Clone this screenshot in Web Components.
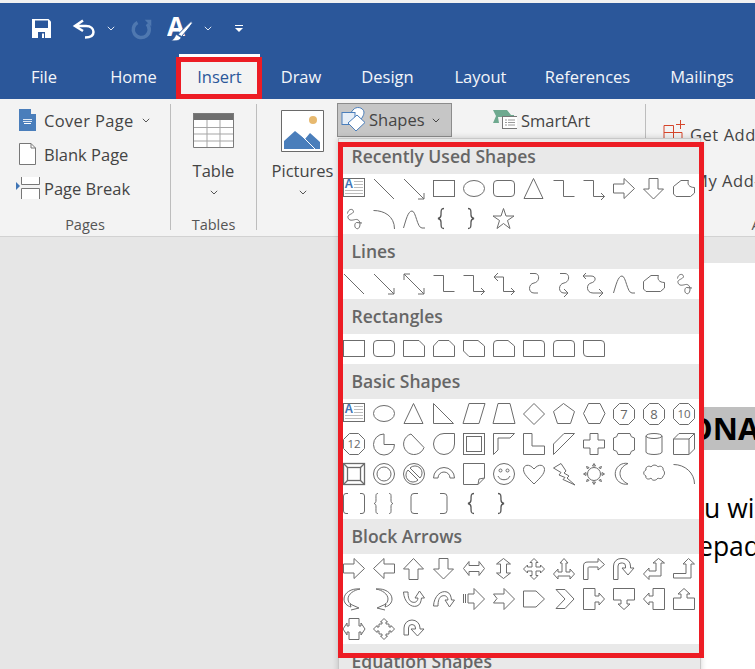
<!DOCTYPE html>
<html lang="en">
<head>
<meta charset="utf-8">
<title>Word Insert Shapes</title>
<style>
html,body{margin:0;padding:0;background:#e6e6e6;}
body{width:755px;height:669px;overflow:hidden;font-family:"Open Sans","Noto Sans",sans-serif;}
</style>
</head>
<body>
<word-app>
  <title-bar slot="top">
    <qat-bar></qat-bar>
    <tab-strip>
      <ribbon-tab style="--w:88px">File</ribbon-tab>
      <ribbon-tab style="--w:91px">Home</ribbon-tab>
      <ribbon-tab active style="--w:81px">Insert</ribbon-tab>
      <ribbon-tab style="--w:82px">Draw</ribbon-tab>
      <ribbon-tab style="--w:91px">Design</ribbon-tab>
      <ribbon-tab style="--w:95px">Layout</ribbon-tab>
      <ribbon-tab style="--w:119px">References</ribbon-tab>
      <ribbon-tab style="--w:110px">Mailings</ribbon-tab>
    </tab-strip>
  </title-bar>
  <ribbon-bar slot="top">
    <ribbon-group label="Pages" style="--w:171px">
      <row-stack>
        <row-button chevron style="letter-spacing:.35px"><rb-icon name="cover" slot="icon"></rb-icon>Cover Page</row-button>
        <row-button><rb-icon name="blank" slot="icon"></rb-icon>Blank Page</row-button>
        <row-button><rb-icon name="break" slot="icon"></rb-icon>Page Break</row-button>
      </row-stack>
    </ribbon-group>
    <ribbon-group label="Tables" style="--w:86px">
      <large-button><rb-icon name="table" slot="icon"></rb-icon>Table</large-button>
    </ribbon-group>
    <ribbon-group style="--w:389px;--pl:16px;--dir:row">
      <large-button style="--bw:59px"><rb-icon name="pictures" slot="icon"></rb-icon>Pictures</large-button>
      <shapes-button><rb-icon name="shapes" slot="icon"></rb-icon>Shapes</shapes-button>
      <smart-button><rb-icon name="smartart" slot="icon"></rb-icon>SmartArt</smart-button>
    </ribbon-group>
    <ribbon-group label="Add-ins" flat style="--w:262px;--pl:17px">
      <addin-stack>
        <addin-row><rb-icon name="addin" slot="icon" style="margin-top:-10px"></rb-icon>Get Add-ins</addin-row>
        <addin-row style="padding-left:3px"><span slot="icon"></span>My Add-ins</addin-row>
      </addin-stack>
    </ribbon-group>
  </ribbon-bar>
  <doc-area slot="main">
    <doc-page>
      <doc-heading>ONA</doc-heading>
      <doc-line>u wi</doc-line>
      <doc-line style="text-indent:-6px">epad</doc-line>
    </doc-page>
  </doc-area>
  <shapes-menu slot="over">
    <shape-section label="Recently Used Shapes" shapes="textbox line arrow rect oval rrect tri elbow elbowarrow rarrow darrow free scribble arc curve lbrace rbrace star"></shape-section>
    <shape-section label="Lines" shapes="line arrow dblarrow elbow elbowarrow elbowdbl curveconn curvearrow curvedbl curve free scribble"></shape-section>
    <shape-section label="Rectangles" shapes="rect rrect snip1 snip2 snipdiag sniprnd rnd1 rnd2 rnddiag"></shape-section>
    <shape-section label="Basic Shapes" shapes="textbox oval tri rtri para trap diamond penta hexa oct7 oct8 oct10 oct12 pie chord tear frame half lshape stripe plus plaque can cube bevel donut nosym blockarc fold smiley heart bolt sun moon cloud arc2 dbracket dbrace lbracket rbracket lbrace rbrace"></shape-section>
    <shape-section label="Block Arrows" shapes="rarrow larrow uarrow darrow lrarrow udarrow quad lru bent uturn leftup bentup curveright curveleft curveup curvedown striped notched pentarrow chevron rcall dcall lcall ucall lrcall quadcall circ"></shape-section>
    <shape-section label="Equation Shapes" shapes=""></shape-section>
  </shapes-menu>
  <red-frame slot="over" style="--l:176px;--t:57px;--fw:86px;--fh:42px"></red-frame>
  <red-frame slot="over" style="--l:338px;--t:142px;--fw:366px;--fh:516px"></red-frame>
</word-app>

<script>
const shadow = (el, html) => { el.attachShadow({mode:'open'}).innerHTML = html; };
const simple = (name, css, markup='<slot></slot>') => {
  customElements.define(name, class extends HTMLElement {
    connectedCallback(){ if(!this.shadowRoot) shadow(this, `<style>${css}</style>${markup}`); }
  });
};
const CHEV = c => `<svg width="8" height="5" viewBox="0 0 8 5" style="display:block"><path d="M.8 .8L4 4 7.2 .8" fill="none" stroke="${c}" stroke-width="1"/></svg>`;

simple('word-app', `:host{display:flex;flex-direction:column;position:relative;width:755px;height:669px;overflow:hidden}
  .main{flex:1;display:flex;min-height:0}`,
  `<slot name="top"></slot><div class="main"><slot name="main"></slot></div><slot name="over"></slot>`);

simple('title-bar', `:host{display:block;background:#2b579a;border-top:3px solid #f1f1f1;height:96px;box-sizing:content-box}`);

simple('qat-bar', `:host{display:flex;align-items:center;height:51px;padding-left:30px;box-sizing:border-box;color:#fff}
  svg{display:block}`,
`<svg width="23" height="20" viewBox="0 0 23 20"><path fill="#fff" d="M2 0H18.500L21 2.500V19H2Z"/><path fill="#2b579a" d="M5 1.500H18V9H5ZM8 13H15V19H8Z"/><path fill="#fff" d="M12 14.500h2V19h-2z"/></svg>
<svg width="24" height="22" viewBox="0 0 24 22" style="margin-left:19px"><path fill="none" stroke="#fff" stroke-width="2.500" d="M11 2.500L3 8l8 5M3 8H14C19 8 21.500 11 21.500 14C21.500 17 19 19.500 13 19.500"/></svg>
<span style="margin-left:11px">${CHEV('#dfe7f2')}</span>
<svg width="24" height="22" viewBox="0 0 24 22" style="margin-left:14px"><path fill="none" stroke="#4f78b0" stroke-width="3.500" d="M8.500 4.500A8 8 0 1 0 18 6"/><path fill="#4f78b0" d="M15.700 1.800H22.300V8.500Z"/></svg>
<svg width="26" height="24" viewBox="0 0 26 24" style="margin-left:14px"><text x="0" y="19" font-family="Open Sans,sans-serif" font-weight="700" font-size="26" fill="#fff">A</text><path fill="#fff" stroke="#2b579a" stroke-width="1" d="M24 4.500L25.500 6C22 11 18.500 15 14.500 19.500L11 17.500C15 13 20 8.500 24 4.500Z"/><path fill="#fff" stroke="#2b579a" stroke-width=".6" d="M9.500 17.500L14 20.500C13.500 23 10 24.500 4 23.500 7.500 22.500 7.500 19.500 9.500 17.500Z"/></svg>
<span style="margin-left:11px">${CHEV('#dfe7f2')}</span>
<svg width="10" height="8" viewBox="0 0 10 8" style="margin-left:22px"><path fill="#fff" d="M1 0H9V1H1ZM1 3H9L5 7Z"/></svg>`);

simple('tab-strip', `:host{display:flex;height:45px;white-space:nowrap}`);

customElements.define('ribbon-tab', class extends HTMLElement {
  connectedCallback(){ if(this.shadowRoot) return;
    shadow(this, `<style>:host{display:flex;align-items:center;justify-content:center;flex:none;width:var(--w);box-sizing:border-box;
      height:45px;padding-bottom:1px;color:#f3f5f9;font-size:16.500px;font-family:"Open Sans",sans-serif}
      :host([active]){background:#f3f3f3;color:#2b579a;border-top:3px solid #fff;padding-bottom:4px;}</style><slot></slot>`);
  }
});

simple('ribbon-bar', `:host{display:flex;align-items:flex-start;flex:none;height:138px;box-sizing:border-box;background:#f3f3f3;border-bottom:1px solid #d2d2d2;padding-top:5px;overflow:hidden;white-space:nowrap;color:#444;font-size:16.500px;font-family:"Open Sans",sans-serif}`);

customElements.define('ribbon-group', class extends HTMLElement {
  connectedCallback(){ if(this.shadowRoot) return;
    const l = this.getAttribute('label');
    shadow(this, `<style>:host{display:flex;flex-direction:column;flex:none;width:var(--w);height:126px;box-sizing:border-box;border-right:1px solid #bdbdbd;padding-left:var(--pl,0)}
      :host([flat]){border-right:0}
      .c{flex:1;display:flex;flex-direction:var(--dir,column);min-height:0}
      .l{height:20px;margin-bottom:-5px;line-height:20px;text-align:center;font-size:14.500px;color:#555;margin-left:calc(0px - var(--pl,0px))}</style>
      <div class="c"><slot></slot></div>${l?`<div class="l">${l}</div>`:''}`);
  }
});

simple('row-stack', `:host{display:flex;flex-direction:column}`);

customElements.define('row-button', class extends HTMLElement {
  connectedCallback(){ if(this.shadowRoot) return;
    shadow(this, `<style>:host{display:flex;align-items:center;height:34px;padding-left:16px}
      .i{width:24px;margin-right:4px;display:flex} .c{margin-left:8px;margin-top:-2px} .t{margin-top:-2px}</style>
      <span class="i"><slot name="icon"></slot></span><span class="t"><slot></slot></span>${this.hasAttribute('chevron')?`<span class="c">${CHEV('#555')}</span>`:''}`);
  }
});

customElements.define('large-button', class extends HTMLElement {
  connectedCallback(){ if(this.shadowRoot) return;
    shadow(this, `<style>:host{display:flex;flex-direction:column;align-items:center;width:var(--bw,auto);padding-top:6px;box-sizing:border-box}
      .i{height:42px;display:flex;align-items:center} .t{line-height:22px;margin-top:8px} .c{margin-top:8px}</style>
      <span class="i"><slot name="icon"></slot></span><span class="t"><slot></slot></span><span class="c">${CHEV('#555')}</span>`);
  }
});

customElements.define('shapes-button', class extends HTMLElement {
  connectedCallback(){ if(this.shadowRoot) return;
    shadow(this, `<style>:host{display:flex;align-items:center;width:115px;height:34px;box-sizing:border-box;margin:-1px 0 0 5px;background:#c6c6c6;border:1px solid #8c8c8c;padding-left:3px;flex:none}
      .i{width:24px;margin-right:4px;display:flex} .c{margin-left:7px} .t{margin-top:-2px}</style>
      <span class="i"><slot name="icon"></slot></span><span class="t"><slot></slot></span><span class="c">${CHEV('#444')}</span>`);
  }
});
simple('smart-button', `:host{display:flex;align-items:center;height:34px;margin-left:41px;flex:none} .i{width:24px;margin-right:4px;display:flex} .t{margin-top:-2px}`,
  `<span class="i"><slot name="icon"></slot></span><span class="t"><slot></slot></span>`);

simple('addin-stack', `:host{display:flex;flex-direction:column;gap:29px;padding-top:22px;letter-spacing:.55px}`);
simple('addin-row', `:host{display:flex;align-items:center;height:17px} .i{width:27px;display:flex}`, `<span class="i"><slot name="icon"></slot></span><slot></slot>`);

const RB = {
cover:[24,24,`<path fill="#4a7ebb" d="M3 0H15L20 5V22H3Z"/><path fill="#f3f3f3" d="M15 0V5H20L20 4 16 0Z"/><path fill="#dfe8f3" d="M7 10h9v1H7zM7 12h9v1H7z"/><path fill="#fff" d="M8 14h7v1H8z"/>`],
blank:[24,24,`<path fill="#fff" stroke="#777" d="M3.500 .5H15L19.500 5V21.500H3.500Z"/><path fill="none" stroke="#777" d="M15 .5V5H19.500"/>`],
break:[24,24,`<path fill="#fff" stroke="none" d="M5 0H24V7H5Z"/><path fill="none" stroke="#777" d="M5.500 0V7.500H23.500V0M5.500 22V11.500H23.500V22"/><path fill="#fff" d="M6 12H23V22H6Z"/><path fill="#3f74b5" d="M0 5V13L4 9Z"/>`],
table:[41,36,`<path fill="#fff" d="M.5 .5H40.500V34.500H.5Z"/><path fill="#6e6e6e" d="M0 0H41V7H0Z"/><path fill="none" stroke="#a5a5a5" d="M14 7V34M27 7V34M1 14.500H40M1 21H40M1 28H40"/><path fill="none" stroke="#7a7a7a" d="M.5 .5H40.500V34.500H.5Z"/>`],
pictures:[43,42,`<path fill="#fff" stroke="#6a6a6a" d="M.5 .5H42.500V41.500H.5Z"/><circle cx="32" cy="10" r="4" fill="#e7b96f"/><path fill="#4a7ebb" d="M3 39V31L14 21 24 29 29 23 39 32V39Z"/><path stroke="#fff" fill="none" d="M20 25L34 39"/>`],
shapes:[26,26,`<path fill="#fff" stroke="#4a7ebb" d="M12 3C15 -1 22 0 23 5 23 8 21 12 17 15L8 8Z"/><rect x="1" y="5.500" width="13" height="12" fill="#e6eef7" stroke="#4a7ebb"/><path fill="#fff" stroke="#4a7ebb" d="M16 8L24 15.500 15 24 7 16Z"/>`],
smartart:[24,24,`<path fill="#6ea98f" d="M0 1H14L18 6 21 6V8H5L6 14H0L3 7Z"/><rect x="9.500" y="7.500" width="15" height="12" fill="#fff" stroke="#777"/><path stroke="#999" d="M12 11h2M15 11h7M12 13.500h2M15 13.500h7M12 16h2M15 16h7"/>`],
addin:[24,20,`<path fill="none" stroke="#d5452a" d="M1 5.500H10.500V19M1 5.500V19M1 12.500H19M19 12.500V19M17.500 0V9M13 4.500H22"/>`],
};
customElements.define('rb-icon', class extends HTMLElement {
  connectedCallback(){ if(this.shadowRoot) return;
    const [w,h,m]=RB[this.getAttribute('name')];
    shadow(this, `<style>:host{display:block;flex:none;line-height:0}</style><svg width="${w}" height="${h}" viewBox="0 0 ${w} ${h}" style="display:block">${m}</svg>`);
  }
});

const oct = n => `<path d="M6.500 .5H15.500L21.500 6.500V15.500L15.500 21.500H6.500L.5 15.500V6.500Z"/><text x="11" y="${n.length>1?15:15.500}" text-anchor="middle" font-size="${n.length>1?11.500:13}" font-family="Open Sans,sans-serif" fill="#666" stroke="none">${n}</text>`;
const P = d => `<path d="${d}"/>`;
const ELBOW='M.5 2.500H10.500V18.500H21.500', HEADR='M18 15L21.500 18.500 18 22', CURV='M7 .5H12C17 .5 17 9 11 10 5 11 5 20 11 20H15';
const LB='M11 .5C8 .5 8 2 8 7 8 9.500 7 10 5 10.500 7 11 8 11.500 8 14 8 19 8 20.500 11 20.500', RBr='M5 .5C8 .5 8 2 8 7 8 9.500 9 10 11 10.500 9 11 8 11.500 8 14 8 19 8 20.500 5 20.500';
const SCRIB='M4.500 5.500C5 1 10 0 10.500 3.500 10.500 6 4 6.500 5 9.500 6 13.500 10 12 12.500 11.500 15 11 17 13 17 16 17 19 15.500 21.500 13.500 20.500 11 19.500 11.500 15 13.500 14.500 15 14.500 17 15 19 15';
const FREE='M.5 8.500L8 2.500H15.500C14 6 16 9.500 21.500 9.500V15L17.500 18.500H3L.5 16Z';
const ARROW={
 r:'M.5 6H11V.5L21.500 10.500 11 20.500V15H.5Z', l:'M21.500 6H11V.5L.5 10.500 11 20.500V15H21.500Z', u:'M6 21.500V11H.5L10.500 .5 20.500 11H15V21.500Z', d:'M6 .5V11H.5L10.500 21 20.500 11H15V.5Z'};
const SH = {
 textbox:`<rect x=".5" y=".5" width="21" height="18" fill="#fff"/><g stroke="#bcbcbc"><path d="M11 3.500H20M11 6.500H20M11 9.500H20M2 12.500H20M2 15.500H20"/></g><text x="1.500" y="10" font-size="12" font-weight="700" font-family="Liberation Sans,sans-serif" fill="#3f74b5" stroke="none">A</text>`,
 line:P('M1 1L21 21'), arrow:P('M1 1L21 21M21 15V21H15'), dblarrow:P('M1 1L21 21M21 15V21H15M1 7V1H7'),
 rect:'<rect x=".5" y="2.500" width="21" height="16"/>', oval:'<ellipse cx="11" cy="10.500" rx="10.500" ry="8"/>', rrect:'<rect x=".5" y="2.500" width="21" height="16" rx="3.500"/>',
 tri:P('M10.500 .5L20 20.500H1Z'), elbow:P(ELBOW), elbowarrow:P(ELBOW+HEADR), elbowdbl:P('M1 4H10.500V18.500H21.500M5 0L1 4 5 8'+HEADR),
 rarrow:P(ARROW.r), larrow:P(ARROW.l), uarrow:P(ARROW.u), darrow:P(ARROW.d), free:P(FREE), scribble:P(SCRIB),
 arc:P('M.5 2.500C11 2.500 21.500 8 21.500 21'), curve:P('M.5 20C3 12 5 3 9 3 13 3 14 20 19 20H22'),
 lbrace:`<path stroke="#555" stroke-width="1.300" d="${LB}"/>`, rbrace:`<path stroke="#555" stroke-width="1.300" d="${RBr}"/>`, star:P('M10.500 .5L13 8H21L14.500 12.500 17 20.500 10.500 15.500 4 20.500 6.500 12.500 0 8H8Z'),
 curveconn:P(CURV), curvearrow:P(CURV+'M11 16L15 20 11 24'), curvedbl:P('M3 0L0 3 3 6M0 3H8C14 3 13 9 8 10 3 11 3 20 10 20H20M16 16L20 20 16 24'),
 snip1:P('M.5 2.500H16L21.500 8V18.500H.5Z'), snip2:P('M5.500 2.500H16L21.500 8V18.500H.5V8Z'), snipdiag:P('M.5 2.500H15L21.500 8V18.500H6L.5 13Z'),
 sniprnd:P('M4 2.500H15L21.500 8V18.500H.5V6A3.500 3.500 0 0 1 4 2.500Z'), rnd1:P('M.5 2.500H18A3.500 3.500 0 0 1 21.500 6V18.500H.5Z'),
 rnd2:P('M4 2.500H18A3.500 3.500 0 0 1 21.500 6V18.500H.5V6A3.500 3.500 0 0 1 4 2.500Z'), rnddiag:P('M.5 2.500H18A3.500 3.500 0 0 1 21.500 6V18.500H4A3.500 3.500 0 0 1 .5 15Z'),
 rtri:P('M.5 .5L20.500 20.500H.5Z'), para:P('M6 .5H22L16 20.500H0Z'), trap:P('M5 .5H17L22 20.500H0Z'), diamond:P('M11 .5L21.500 11 11 21.500 .5 11Z'),
 penta:P('M10.500 .5L21.500 8.500 17.500 20.500H4.500L.5 8.500Z'), hexa:P('M5.500 .5H17L22 10.500 17 20.500H5.500L.5 10.500Z'),
 oct7:oct('7'), oct8:oct('8'), oct10:oct('10'), oct12:oct('12'),
 pie:P('M11 1A10.500 10.500 0 1 0 21.500 11.500H11Z'), chord:P('M8 1L21 14.500A10.500 10.500 0 1 1 8 1Z'), tear:P('M11 .5H21.500V11A10.500 10.500 0 1 1 11 .5Z'),
 frame:'<rect x=".5" y=".5" width="21" height="21"/><rect x="3.500" y="3.500" width="15" height="15"/>', half:P('M.5 .5H21.500L17 5H5V17L.5 21.500Z'),
 lshape:P('M.5 .5H9V13H21.500V21.500H.5Z'), stripe:P('M.5 11L11 .5H21.500L.5 21.500Z'), plus:P('M7 .5H15V7H21.500V15H15V21.500H7V15H.5V7H7Z'),
 plaque:P('M5 .5H17A5 5 0 0 0 21.500 5V17A5 5 0 0 0 17 21.500H5A5 5 0 0 0 .5 17V5A5 5 0 0 0 5 .5Z'),
 can:'<ellipse cx="11" cy="3" rx="8" ry="2.500"/><path d="M3 3V19A8 2.500 0 0 0 19 19V3"/>', cube:P('M.5 6L6 .5H21.500V16L16 21.500H.5ZM.5 6H16V21.500M16 6L21.500 .5'),
 bevel:`<g stroke-width="1.300"><rect x=".5" y=".5" width="21" height="21"/><rect x="4.500" y="4.500" width="13" height="13"/><path d="M.5 .5L4.500 4.500M21.500 .5L17.500 4.500M.5 21.500L4.500 17.500M21.500 21.500L17.500 17.500"/></g>`,
 donut:'<circle cx="11" cy="11" r="10.500"/><circle cx="11" cy="11" r="7"/>', nosym:'<circle cx="11" cy="11" r="10.500"/><path d="M5 7L15 17A7 7 0 0 1 5 7ZM7 5L17 15A7 7 0 0 0 7 5Z"/>',
 blockarc:P('M.5 15A10.500 10.500 0 0 1 21.500 15H17A6 6 0 0 0 5 15Z'), fold:P('M.5 .5H21.500V15L15 21.500H.5ZM15 21.500L16 16 21.500 15'),
 smiley:'<circle cx="11" cy="11" r="10.500"/><circle cx="7.500" cy="7.500" r="1.500"/><circle cx="14.500" cy="7.500" r="1.500"/><path d="M5 13C7 18 15 18 17 13"/>',
 heart:P('M11 21C5 15 .5 11 .5 6.500C.5 2 6 0 11 6 16 0 21.500 2 21.500 6.500 21.500 11 17 15 11 21Z'), bolt:P('M.5 5L8 .5 13 8 11 10 16 13 14 15 22 22 10 16.500 12 14.500 6 12 8 9.500Z'),
 sun:'<circle cx="11" cy="11" r="6.500"/><path d="M11 .5L12.500 3H9.500ZM11 21.500L12.500 19H9.500ZM.5 11L3 9.500V12.500ZM21.500 11L19 9.500V12.500ZM3.500 3.500L6 4.500 4.500 6ZM18.500 3.500L16 4.500 17.500 6ZM3.500 18.500L6 17.500 4.500 16ZM18.500 18.500L16 17.500 17.500 16Z"/>',
 moon:P('M15 .5A10.500 10.500 0 1 0 15 21C9 18 7 14 7 10.500 7 7 9 3 15 .5Z'), cloud:P('M3 7C2 4 6 2 8 4 10 1 14 2 15 4 17 2 21 4 20 7 22 8 22 12 20 13 20 16 16 16 15 15 13 18 9 18 8 15 6 17 2 16 3 13 0 12 0 8 3 7Z'),
 arc2:P('M.5 1.500C12 1.500 21.500 10 21.500 21'),
 dbracket:P('M5 .5H3A2.500 2.500 0 0 0 .5 3V18A2.500 2.500 0 0 0 3 20.500H5M17 .5H19A2.500 2.500 0 0 1 21.500 3V18A2.500 2.500 0 0 1 19 20.500H17'),
 dbrace:P('M5 .5C2.500 .5 3 2 3 7 3 9.500 2.500 10 1 10.500 2.500 11 3 11.500 3 14 3 19 2.500 20.500 5 20.500M16 .5C18.500 .5 18 2 18 7 18 9.500 18.500 10 20 10.500 18.500 11 18 11.500 18 14 18 19 18.500 20.500 16 20.500'),
 lbracket:P('M15 .5H11A3 3 0 0 0 8 3.500V17.500A3 3 0 0 0 11 20.500H15'), rbracket:P('M7 .5H11A3 3 0 0 1 14 3.500V17.500A3 3 0 0 1 11 20.500H7'),
 lrarrow:P('M.5 10.500L6 3.500V7.500H16V3.500L21.500 10.500 16 17.500V13.500H6V17.500Z'), udarrow:P('M10.500 .5L17.500 6H13.500V15H17.500L10.500 20.500 3.500 15H7.500V6H3.500Z'),
 quad:P('M11 .5L15 4.500H13V9H17.500V7L21.500 11 17.500 15V13H13V17.500H15L11 21.500 7 17.500H9V13H4.500V15L.5 11 4.500 7V9H9V4.500H7Z'),
 lru:P('M11 .5L15 5H13V14H17V11L21.500 16 17 21V18H5V21L.5 16 5 11V14H9V5H7Z'),
 bent:P('M.5 21.500V8C.5 5 2 4 5 4H15V.5L21.500 6.500 15 12V9H6C5 9 5 10 5 10V21.500Z'),
 uturn:P('M.5 21.500V8A7.500 7.500 0 0 1 8 .5H10A7.500 7.500 0 0 1 17.500 8V10H21L15 17 9 10H12.500V8A3 3 0 0 0 9.500 5H8A3 3 0 0 0 5 8V21.500Z'),
 leftup:P('M.5 16L6 10V13H13V5H10L15.500 .5 21.500 5H18V18H6V21.500Z'), bentup:P('M.5 15.500H13V6H10L15.500 .5 21.500 6H18V20H.5Z'),
 curveright:P('M17 1C8 0 1 5 1 11 1 15 4 18 8 19L7 16 16 20 8 22M17 1C11 2 5 6 5 11 5 14 7 16 8 16'),
 curveleft:P('M3 1C12 0 19 5 19 11 19 15 16 18 12 19L13 16 4 20 12 22M3 1C9 2 15 6 15 11 15 14 13 16 12 16'),
 curveup:P('M.5 4C1 14 8 20 14 18 17 17 18 14 18.500 10H21.500L16.500 3 12 10H15C14.500 14 12 15 9 14 6 13 5 9 5 4Z'),
 curvedown:P('M.5 18C1 8 8 2 14 4 17 5 18 8 18.500 12H21.500L16.500 19 12 12H15C14.500 8 12 7 9 8 6 9 5 13 5 18Z'),
 striped:P('M5 6H11V.5L21.500 11 11 21.500V15H5ZM.5 6V15M2.500 6V15'), notched:P('M.5 6H11V.5L21.500 11 11 21.500V15H.5L4 10.500Z'),
 pentarrow:P('M.5 3H13L21.500 11 13 19H.5Z'), chevron:P('M3 1.500H12L21 11 12 20.500H3L12 11Z'),
 rcall:P('M.5 .5H12V8H16V5L21.500 11 16 17V14H12V21.500H.5Z'), dcall:P('M.5 .5H21.500V12H14V16H17L11 21.500 5 16H8V12H.5Z'),
 lcall:P('M21.500 .5H10V8H6V5L.5 11 6 17V14H10V21.500H21.500Z'), ucall:P('M.5 21.500H21.500V10H14V6H17L11 .5 5 6H8V10H.5Z'),
 lrcall:P('M6 .5H16V8H18V5L22 11 18 17V14H16V21.500H6V14H4V17L0 11 4 5V8H6Z'),
 quadcall:P('M11 .5L14.500 4H13V6H16V9H18V7.500L21.500 11 18 14.500V13H16V16H13V18H14.500L11 21.500 7.500 18H9V16H6V13H4V14.500L.5 11 4 7.500V9H6V6H9V4H7.500Z'),
 circ:P('M1 17V10A8 8 0 0 1 17 10V11H21L14.500 18 8 11H12.500V10A3.500 3.500 0 0 0 5.500 10V17Z'),
};
customElements.define('shape-icon', class extends HTMLElement {
  connectedCallback(){ if(this.shadowRoot) return;
    shadow(this, `<style>:host{display:block;width:30px;height:30px}svg{display:block}</style>
      <svg width="30" height="30" viewBox="-4 -4 30 30" fill="none" stroke="#6c6c6c" stroke-width="1">${SH[this.getAttribute('name')]||''}</svg>`);
  }
});
customElements.define('shape-section', class extends HTMLElement {
  connectedCallback(){ if(this.shadowRoot) return;
    const names=(this.getAttribute('shapes')||'').split(/\s+/).filter(Boolean);
    shadow(this, `<style>:host{display:block}
      .h{height:35px;background:#e9e9e9;padding-left:12.500px;font:600 17.500px/35px "Open Sans",sans-serif;color:#666;box-sizing:border-box}
      .g{display:grid;grid-template-columns:repeat(12,30px);background:#fff}</style>
      <div class="h">${this.getAttribute('label')}</div>
      ${names.length?`<div class="g">${names.map(n=>`<shape-icon name="${n}"></shape-icon>`).join('')}</div>`:''}`);
  }
});
simple('shapes-menu', `:host{display:block;position:absolute;left:338px;top:138px;width:363px;height:540px;box-sizing:border-box;background:#fff;border:1px solid #c8c8c8;box-shadow:0 0 6px rgba(0,0,0,.18);white-space:nowrap}`);
simple('red-frame', `:host{display:block;position:absolute;left:var(--l);top:var(--t);width:var(--fw);height:var(--fh);box-sizing:border-box;border:5px solid #ed1c24;pointer-events:none}`);
simple('doc-area', `:host{display:flex;flex:1;background:#e6e6e6;padding:26px 0 0 400px;box-sizing:border-box;min-width:0;overflow:hidden}`);
simple('doc-page', `:host{display:block;flex:1;background:#fff;padding:144px 0 0 304px;color:#000;white-space:nowrap;overflow:hidden;font-family:"Open Sans",sans-serif}`);
simple('doc-heading', `:host{display:block;height:43px;line-height:43px;background:#bfbfbf;font-size:31px;font-weight:700;margin:0 0 39px;overflow:hidden;text-indent:-16px}`);
simple('doc-line', `:host{display:block;font-size:26.500px;line-height:38px;overflow:hidden}`);
</script>
</body>
</html>
